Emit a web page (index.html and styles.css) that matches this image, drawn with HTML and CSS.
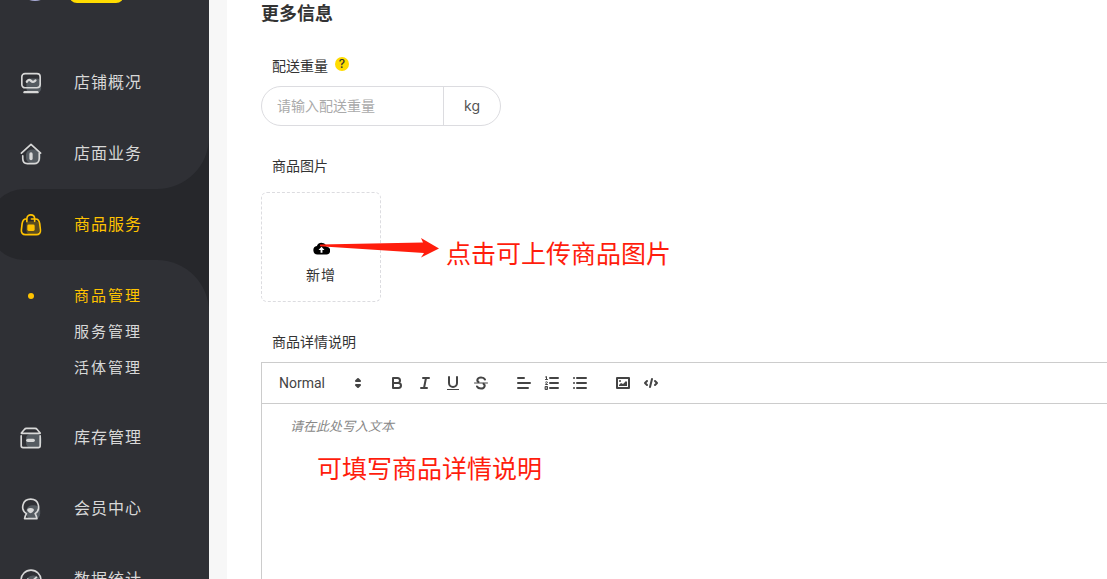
FILE: index.html
```html
<!DOCTYPE html>
<html lang="zh-CN">
<head>
<meta charset="utf-8">
<meta name="viewport" content="width=device-width, initial-scale=1">
<title>商品管理</title>
<link rel="stylesheet" href="styles.css">
</head>
<body>
<div class="shell">
  <nav class="sidebar">
    <div class="group group-top">
      <div class="profile"><span class="avatar"></span><span class="plan"></span></div>
      <a class="item" href="#overview">
        <svg class="icon" viewBox="0 0 24 24"><rect class="shade" x="7" y="7" width="16" height="16" rx="5"/><rect class="line" x="2" y="1.700" width="20" height="15.500" rx="3.500"/><path class="line thick" d="M7.500 10.500c1.500-2.500 3-2.300 4.500-.8s3 1.500 4.800-.5"/><path class="line thick" d="M5 22h14"/></svg>
        <span>店铺概况</span></a>
      <a class="item" href="#store">
        <svg class="icon" viewBox="0 0 24 24"><rect class="shade" x="6.500" y="7" width="16" height="15" rx="6"/><path class="line" d="M1.500 11 12 1.500l10.500 9.500"/><path class="line" d="M3 14v3c0 3.500 2 5.500 5 5.500h7.500c3 0 5.500-2 5.500-5.500v-6"/><path class="line bar" d="M12 12v5"/></svg>
        <span>店面业务</span></a>
    </div>
    <div class="current">
      <a class="item active" href="#goods" aria-current="true">
        <svg class="icon" viewBox="0 0 24 24"><rect class="shade" x="7" y="8" width="14" height="14" rx="4"/><path class="line" d="M7.500 8.500V5.500C7.500-.5 16-.5 16 5.500V8M12.500 5.500h4.500c2.500 0 4 2 4.500 5l.8 7c.3 3-1.300 5-4.500 5H6c-3.200 0-4.800-2-4.500-5l.8-7C2.800 7.500 4 5.500 6.500 5.500h1"/><rect class="solid" x="8" y="11.500" width="8" height="7" rx="1.500"/></svg>
        <span>商品服务</span></a>
    </div>
    <div class="group group-bottom">
      <div class="submenu">
        <a class="subitem selected" href="#goods-list">商品管理</a>
        <a class="subitem" href="#services">服务管理</a>
        <a class="subitem" href="#pets">活体管理</a>
      </div>
      <a class="item" href="#stock">
        <svg class="icon" viewBox="0 0 24 24"><rect class="shade" x="6.500" y="7" width="17" height="16" rx="6"/><path class="line" d="M1.500 7h20.500M1.500 6.500 5 2.500Q5.500 1.500 7 1.500h9.500q1.500 0 2 1L22 6.500M1.300 9.500v11q0 2 2 2h16.700q2 0 2-2v-11"/><path class="line bar" d="M8.500 14.500h6"/></svg>
        <span>库存管理</span></a>
      <a class="item" href="#members">
        <svg class="icon" viewBox="0 0 24 24"><rect class="shade" x="7" y="8" width="15" height="15" rx="6"/><path class="line" d="M7 17C0 12.500 2.500 1.300 11.700 1.300S23 12.500 16.500 17q1.500 2.500 2 5.500H5q.5-3 2-5.500"/><path class="solid" d="M8 12q3.500-2 7 0v2q-3.500 5-7 0z"/></svg>
        <span>会员中心</span></a>
      <a class="item" href="#stats">
        <svg class="icon" viewBox="0 0 24 24"><rect class="shade" x="7" y="7" width="15" height="15" rx="7"/><circle class="line" cx="12" cy="12" r="10.800"/><path class="line" d="m8.500 11 3.500 3 6-5"/></svg>
        <span>数据统计</span></a>
    </div>
  </nav>
  <main class="content">
    <h2 class="title">更多信息</h2>
    <div class="label-row"><label for="weight">配送重量</label><button class="help" type="button" aria-label="帮助">?</button></div>
    <div class="weight"><input id="weight" type="text" placeholder="请输入配送重量"><span class="unit">kg</span></div>
    <div class="label-row label-image"><label for="upload">商品图片</label></div>
    <div class="upload-wrap">
      <button class="upload" id="upload" type="button">
        <svg class="cloud" viewBox="0 0 18 14"><path d="M14.500 5.100A5.600 5.600 0 0 0 4 4.200 4.700 4.700 0 0 0 4.700 13.500h9A4.200 4.200 0 0 0 14.500 5.100zM10 8.500v3.200H8V8.500H5.800L9 5.200 12.200 8.500z"/></svg>
        <span>新增</span></button>
      <svg class="arrow" viewBox="0 0 120 20"><path fill="#ff1d0c" d="M0 6.500 103 4.500 101 0 119 10.500 101 19.500 104 15 0 8.200z"/></svg>
      <span class="note note-upload">点击可上传商品图片</span>
    </div>
    <div class="label-row label-detail"><label for="detail">商品详情说明</label></div>
    <section class="editor">
      <div class="toolbar">
        <div class="picker"><select aria-label="段落格式"><option>Normal</option></select><svg viewBox="0 0 18 18"><path class="qf qs" d="m7 11 2 2 2-2zM7 7l2-2 2 2z"/></svg></div>
        <div class="tools">
          <button type="button" aria-label="粗体"><svg viewBox="0 0 18 18"><path class="qs" d="M5 4h4.500a2.500 2.500 0 0 1 0 5H5zM5 9h5.500a2.500 2.500 0 0 1 0 5H5z"/></svg></button>
          <button type="button" aria-label="斜体"><svg viewBox="0 0 18 18"><path class="qs" d="M7 4h6M5 14h6M8 14l2-10"/></svg></button>
          <button type="button" aria-label="下划线"><svg viewBox="0 0 18 18"><path class="qs" d="M5 3v6a4 4 0 0 0 8 0V3"/><rect class="qf" x="3" y="15" width="12" height="1"/></svg></button>
          <button type="button" aria-label="删除线"><svg viewBox="0 0 18 18"><path class="qs thin" d="M2.500 9h13"/><path class="qs" d="M13 5.500C12 3.500 10.500 3.500 9 3.500 5 3.500 4.500 7 6.500 8M5 12.500c1 2 2.500 2 4 2 4 0 4.500-3.500 2.500-4.700"/></svg></button>
        </div>
        <div class="tools">
          <button type="button" aria-label="对齐"><svg viewBox="0 0 18 18"><path class="qs" d="M3 9h12M3 14h10M3 4h6"/></svg></button>
          <button type="button" aria-label="有序列表"><svg viewBox="0 0 18 18"><path class="qs" d="M7 4h8M7 9h8M7 14h8"/><path class="qs thin" d="M2.500 5.500h2M3.500 5.500v-3l-1 .5M4.500 10.500h-2c0-1.500 2-1 2-2s-1.500-1-2-.3M2.500 12.500h2v3h-2zM2.500 14h2"/></svg></button>
          <button type="button" aria-label="无序列表"><svg viewBox="0 0 18 18"><path class="qs" d="M6 4h9M6 9h9M6 14h9M3 4h.01M3 9h.01M3 14h.01"/></svg></button>
        </div>
        <div class="tools">
          <button type="button" aria-label="图片"><svg viewBox="0 0 18 18"><rect class="qs" x="3" y="4" width="12" height="10"/><circle class="qf" cx="6" cy="7" r="1"/><path class="qf" d="M5 12v-1l2-2 2 1 3-3 1 1v4z"/></svg></button>
          <button type="button" aria-label="代码"><svg viewBox="0 0 18 18"><path class="qs" d="M5 7 3 9l2 2M13 7l2 2-2 2M10 5 8 13"/></svg></button>
        </div>
      </div>
      <div class="editor-body">
        <textarea id="detail" placeholder="请在此处写入文本"></textarea>
        <span class="note note-detail">可填写商品详情说明</span>
      </div>
    </section>
  </main>
</div>
</body>
</html>
```
FILE: styles.css
```css
* { box-sizing: border-box; }
body {
  margin: 0;
  font-family: Inter, "Noto Sans CJK SC", sans-serif;
  font-size: 14px;
  line-height: 20px;
  color: #333;
}
button, input, select, textarea { font: inherit; color: inherit; }
button { padding: 0; border: 0; background: none; cursor: pointer; }

.shell { display: flex; height: 100vh; overflow: hidden; background: #f7f7f7; }

/* Sidebar */
.sidebar { flex: 0 0 209px; background: #26272b; overflow: hidden; }
.group { background: #2f3035; }
.group-top { border-bottom-right-radius: 52px; }
.group-bottom { border-top-right-radius: 52px; padding-top: 18px; min-height: 100vh; }
.current { background: linear-gradient(90deg, #2f3035 50%, #26272b 50%); }
.profile { display: flex; align-items: flex-start; gap: 17px; height: 47px; padding-left: 18px; }
.avatar { width: 34px; height: 34px; margin-top: -33px; border-radius: 50%; background: #a9abd6; }
.plan { width: 55px; height: 20px; margin-top: -17px; border-radius: 8px; background: #ffdc00; }
.item {
  display: flex;
  align-items: center;
  gap: 32px;
  height: 71px;
  padding-left: 20px;
  color: #d8d8d8;
  font-size: 16px;
  letter-spacing: 1px;
  text-decoration: none;
}
.item span { padding-bottom: 2px; }
.item.active {
  margin-left: -11px;
  padding-left: 31px;
  border-radius: 35px 0 0 35px;
  background: #26272b;
  color: #ffc300;
}
.icon { width: 22px; height: 22px; overflow: visible; }
.line { fill: none; stroke: currentColor; stroke-width: 1.800; stroke-linecap: round; stroke-linejoin: round; }
.thick { stroke-width: 2.600; }
.bar { stroke-width: 3.600; }
.solid { fill: currentColor; }
.shade { fill: #555b61; }
.active .shade { fill: #5b4d20; }
.submenu { padding-bottom: 16px; }
.subitem {
  display: flex;
  align-items: center;
  height: 36px;
  padding-left: 74px;
  color: #d8d8d8;
  font-size: 15px;
  letter-spacing: 2px;
  text-decoration: none;
}
.subitem.selected { padding-left: 28px; gap: 40px; color: #ffc300; }
.subitem.selected::before { content: ""; width: 6px; height: 6px; border-radius: 50%; background: #ffc300; }

/* Form */
.content {
  flex: 1;
  display: flex;
  flex-direction: column;
  margin-left: 18px;
  padding-left: 34px;
  background: #fff;
}
.title { margin: 0; font-size: 18px; line-height: 28px; font-weight: 700; }
.label-row { display: flex; gap: 7px; margin-top: 28px; padding-left: 11px; }
.label-image { margin-top: 30px; }
.label-detail { margin-top: 30px; }
.help {
  width: 14px;
  height: 14px;
  margin-top: 1px;
  border-radius: 50%;
  background: #ffdc00;
  font-size: 12px;
  line-height: 14px;
  font-weight: 500;
}
.weight {
  display: flex;
  width: 240px;
  height: 40px;
  margin-top: 10px;
  border: 1px solid #dcdce0;
  border-radius: 20px;
  overflow: hidden;
}
.weight input { flex: 1; min-width: 0; padding: 0 15px; border: 0; outline: 0; background: none; }
.weight input::placeholder { color: #aaa; opacity: 1; }
.unit { width: 57px; border-left: 1px solid #dcdce0; line-height: 38px; text-align: center; color: #555; }

.upload-wrap { position: relative; margin-top: 16px; }
.upload {
  display: flex;
  flex-direction: column;
  align-items: center;
  justify-content: flex-end;
  gap: 10px;
  width: 120px;
  height: 110px;
  padding-bottom: 16px;
  border: 1px dashed #dcdce0;
  border-radius: 6px;
  letter-spacing: 1px;
}
.cloud { width: 17px; height: 13px; fill: #000; }
.arrow { position: absolute; left: 59px; top: 46px; width: 120px; height: 20px; }
.note { position: absolute; color: #ff1d0c; font-size: 25px; line-height: 36px; white-space: nowrap; pointer-events: none; }
.note-upload { left: 185px; top: 44px; }

/* Rich text editor */
.editor { flex: 1; display: flex; flex-direction: column; margin-top: 10px; border: 1px solid #ccc; border-width: 1px 0 0 1px; }
.toolbar { display: flex; align-items: center; gap: 15px; height: 40px; padding-left: 9px; color: #444; }
.picker { position: relative; width: 97px; height: 24px; }
.picker select {
  width: 100%;
  height: 24px;
  padding: 0 8px;
  border: 0;
  appearance: none;
  background: none;
  font-family: Roboto, "Liberation Sans", sans-serif;
  line-height: 24px;
}
.picker svg { position: absolute; right: 1px; top: 3px; pointer-events: none; }
.toolbar svg { display: block; width: 18px; height: 18px; }
.tools { display: flex; }
.tools button { width: 28px; height: 24px; padding: 3px 5px; }
.qs { fill: none; stroke: #444; stroke-width: 2; stroke-linecap: round; stroke-linejoin: round; }
.qf { fill: #444; }
.thin { stroke-width: 1; }
.editor-body { position: relative; flex: 1; display: flex; border-top: 1px solid #ccc; }
.editor textarea { flex: 1; padding: 12px 28px; border: 0; outline: 0; resize: none; background: none; font-size: 13px; }
.editor textarea::placeholder { color: #888; font-style: italic; opacity: 1; }
.note-detail { left: 55px; top: 47px; }
```
